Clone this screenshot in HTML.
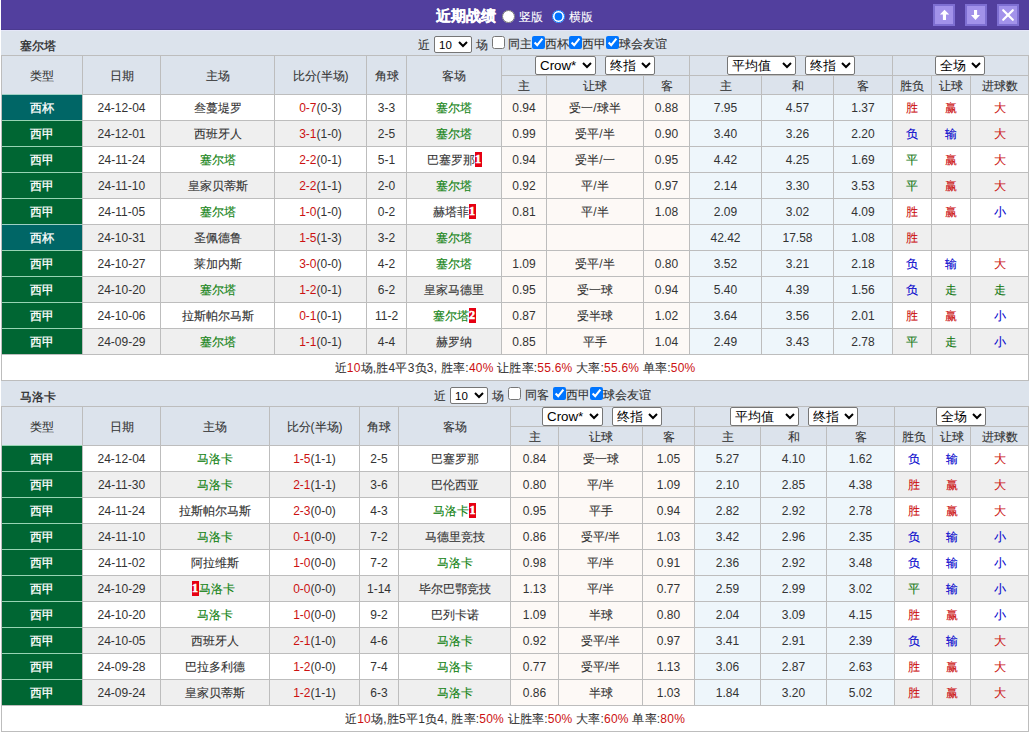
<!DOCTYPE html>
<html><head><meta charset="utf-8"><style>
html,body{margin:0;padding:0;background:#fff;width:1031px;height:734px;overflow:hidden;position:relative}
body{font-family:"Liberation Sans",sans-serif;font-size:12px;color:#333333}
.a{position:absolute}
.t{position:absolute;text-align:center;white-space:nowrap;overflow:visible}
.c{-webkit-text-stroke:var(--s,0.1px) currentColor}
.bd{background:#e60012;color:#fff;font-weight:bold;font-family:"Liberation Serif",serif;padding:0;width:7px;text-align:center;display:inline-block;line-height:15px;vertical-align:1px;-webkit-text-stroke:0.6px #fff}
.sl{position:absolute;margin:0;font-family:"Liberation Sans",sans-serif;font-size:13.33px;color:#000;background:#fff;border:1px solid #767676;border-radius:2px}
.cb{position:absolute;margin:0;width:13px;height:13px}
.rd{position:absolute;margin:0;width:13px;height:13px}
.btn{position:absolute;width:18px;height:18px;border:2px solid #7e6fd2;background:#a292ea}
</style></head><body>
<div class="a" style="left:1px;top:0px;width:1028px;height:30px;background:#523f9e;"></div><div class="t" style="left:436px;top:1px;height:30px;line-height:30px;color:#fff;font-weight:bold;font-size:15px;text-align:left;--s:0.3px"><span class="c">近期战绩</span></div><input type="radio" name="v" class="rd" style="left:502px;top:10px"><div class="t" style="left:519px;top:0px;height:30px;line-height:34px;color:#fff;text-align:left"><span class="c">竖版</span></div><input type="radio" name="v" class="rd" checked style="left:552px;top:10px"><div class="t" style="left:569px;top:0px;height:30px;line-height:34px;color:#fff;text-align:left"><span class="c">横版</span></div><div class="btn" style="left:933px;top:4px"></div><div class="btn" style="left:965px;top:4px"></div><div class="btn" style="left:997px;top:4px"></div><svg class="a" style="left:933px;top:4px" width="22" height="22" viewBox="0 0 22 22"><path d="M11.5 5.7 L16.2 10.6 H13 V15.9 H9.9 V10.6 H6.9 Z" fill="#fff"/></svg><svg class="a" style="left:965px;top:4px" width="22" height="22" viewBox="0 0 22 22"><path d="M9 6 H12.1 V11.1 H15 L10.5 15.9 L6 11.1 H9 Z" fill="#fff"/></svg><svg class="a" style="left:997px;top:4px" width="22" height="22" viewBox="0 0 22 22"><path d="M6.2 6.2 L15.8 15.8 M15.8 6.2 L6.2 15.8" stroke="#fff" stroke-width="2.2" stroke-linecap="round"/></svg><div class="a" style="left:1px;top:30px;width:1028px;height:25px;background:#dce3ec;"></div><div class="a" style="left:1px;top:29px;width:1028px;height:1px;background:#4b3a90;"></div><div class="a" style="left:1px;top:30px;width:1028px;height:1px;background:#e4e6f8;"></div><div class="t" style="left:20px;top:33px;height:25px;line-height:27px;text-align:left;color:#222;--s:0.25px"><span class="c">塞尔塔</span></div><div class="t" style="left:418px;top:32px;height:25px;line-height:27px;text-align:left"><span class="c">近</span></div><select class="sl" style="left:434px;top:36px;width:38px;height:17px;font-size:11.5px"><option>10</option></select><div class="t" style="left:476px;top:32px;height:25px;line-height:27px;text-align:left"><span class="c">场</span></div><input type="checkbox" class="cb" style="left:492px;top:36px"><div class="t" style="left:508px;top:31px;height:25px;line-height:27px;text-align:left"><span class="c">同主</span></div><input type="checkbox" class="cb" checked style="left:532px;top:36px"><div class="t" style="left:545px;top:31px;height:25px;line-height:27px;text-align:left"><span class="c">西杯</span></div><input type="checkbox" class="cb" checked style="left:569px;top:36px"><div class="t" style="left:582px;top:31px;height:25px;line-height:27px;text-align:left"><span class="c">西甲</span></div><input type="checkbox" class="cb" checked style="left:606px;top:36px"><div class="t" style="left:619px;top:31px;height:25px;line-height:27px;text-align:left"><span class="c">球会友谊</span></div><div class="a" style="left:1px;top:55px;width:1028px;height:326px;background:#bdbdbd;"></div><div class="a" style="left:2px;top:56px;width:80px;height:38px;background:#dce3ec;"></div><div class="t" style="left:2px;top:57px;width:80px;height:38px;line-height:38px;"><span class="c">类型</span></div><div class="a" style="left:83px;top:56px;width:77px;height:38px;background:#dce3ec;"></div><div class="t" style="left:83px;top:57px;width:77px;height:38px;line-height:38px;"><span class="c">日期</span></div><div class="a" style="left:161px;top:56px;width:113px;height:38px;background:#dce3ec;"></div><div class="t" style="left:161px;top:57px;width:113px;height:38px;line-height:38px;"><span class="c">主场</span></div><div class="a" style="left:275px;top:56px;width:91px;height:38px;background:#dce3ec;"></div><div class="t" style="left:275px;top:57px;width:91px;height:38px;line-height:38px;"><span class="c">比分</span>(<span class="c">半场</span>)</div><div class="a" style="left:367px;top:56px;width:39px;height:38px;background:#dce3ec;"></div><div class="t" style="left:367px;top:57px;width:39px;height:38px;line-height:38px;"><span class="c">角球</span></div><div class="a" style="left:407px;top:56px;width:94px;height:38px;background:#dce3ec;"></div><div class="t" style="left:407px;top:57px;width:94px;height:38px;line-height:38px;"><span class="c">客场</span></div><div class="a" style="left:502px;top:56px;width:187px;height:19px;background:#dce3ec;"></div><div class="a" style="left:690px;top:56px;width:202px;height:19px;background:#dce3ec;"></div><div class="a" style="left:893px;top:56px;width:135px;height:19px;background:#dce3ec;"></div><div class="a" style="left:502px;top:76px;width:44px;height:18px;background:#dce3ec;"></div><div class="t" style="left:502px;top:77px;width:44px;height:18px;line-height:18px;"><span class="c">主</span></div><div class="a" style="left:547px;top:76px;width:96px;height:18px;background:#dce3ec;"></div><div class="t" style="left:547px;top:77px;width:96px;height:18px;line-height:18px;"><span class="c">让球</span></div><div class="a" style="left:644px;top:76px;width:45px;height:18px;background:#dce3ec;"></div><div class="t" style="left:644px;top:77px;width:45px;height:18px;line-height:18px;"><span class="c">客</span></div><div class="a" style="left:690px;top:76px;width:71px;height:18px;background:#dce3ec;"></div><div class="t" style="left:690px;top:77px;width:71px;height:18px;line-height:18px;"><span class="c">主</span></div><div class="a" style="left:762px;top:76px;width:71px;height:18px;background:#dce3ec;"></div><div class="t" style="left:762px;top:77px;width:71px;height:18px;line-height:18px;"><span class="c">和</span></div><div class="a" style="left:834px;top:76px;width:58px;height:18px;background:#dce3ec;"></div><div class="t" style="left:834px;top:77px;width:58px;height:18px;line-height:18px;"><span class="c">客</span></div><div class="a" style="left:893px;top:76px;width:38px;height:18px;background:#dce3ec;"></div><div class="t" style="left:893px;top:77px;width:38px;height:18px;line-height:18px;"><span class="c">胜负</span></div><div class="a" style="left:932px;top:76px;width:38px;height:18px;background:#dce3ec;"></div><div class="t" style="left:932px;top:77px;width:38px;height:18px;line-height:18px;"><span class="c">让球</span></div><div class="a" style="left:971px;top:76px;width:57px;height:18px;background:#dce3ec;"></div><div class="t" style="left:971px;top:77px;width:57px;height:18px;line-height:18px;"><span class="c">进球数</span></div><div class="a" style="left:2px;top:94px;width:80px;height:1px;background:#9fd0c4;"></div><div class="a" style="left:2px;top:95px;width:80px;height:25px;background:#006666;"></div><div class="t" style="left:2px;top:96px;width:80px;height:25px;line-height:25px;color:#fff;--s:0.3px;"><span class="c">西杯</span></div><div class="a" style="left:83px;top:95px;width:77px;height:25px;background:#ffffff;"></div><div class="t" style="left:83px;top:96px;width:77px;height:25px;line-height:25px;">24-12-04</div><div class="a" style="left:161px;top:95px;width:113px;height:25px;background:#ffffff;"></div><div class="t" style="left:161px;top:96px;width:113px;height:25px;line-height:25px;"><span class="c">叁蔓堤罗</span></div><div class="a" style="left:275px;top:95px;width:91px;height:25px;background:#ffffff;"></div><div class="t" style="left:275px;top:96px;width:91px;height:25px;line-height:25px;"><span style="color:#cc1111">0-7</span>(0-3)</div><div class="a" style="left:367px;top:95px;width:39px;height:25px;background:#ffffff;"></div><div class="t" style="left:367px;top:96px;width:39px;height:25px;line-height:25px;">3-3</div><div class="a" style="left:407px;top:95px;width:94px;height:25px;background:#ffffff;"></div><div class="t" style="left:407px;top:96px;width:94px;height:25px;line-height:25px;"><span style="color:#0d800d"><span class="c">塞尔塔</span></span></div><div class="a" style="left:502px;top:95px;width:44px;height:25px;background:#fdf9f6;"></div><div class="t" style="left:502px;top:96px;width:44px;height:25px;line-height:25px;">0.94</div><div class="a" style="left:547px;top:95px;width:96px;height:25px;background:#fdf9f6;"></div><div class="t" style="left:547px;top:96px;width:96px;height:25px;line-height:25px;"><span class="c">受一</span>/<span class="c">球半</span></div><div class="a" style="left:644px;top:95px;width:45px;height:25px;background:#fdf9f6;"></div><div class="t" style="left:644px;top:96px;width:45px;height:25px;line-height:25px;">0.88</div><div class="a" style="left:690px;top:95px;width:71px;height:25px;background:#eef6fb;"></div><div class="t" style="left:690px;top:96px;width:71px;height:25px;line-height:25px;">7.95</div><div class="a" style="left:762px;top:95px;width:71px;height:25px;background:#eef6fb;"></div><div class="t" style="left:762px;top:96px;width:71px;height:25px;line-height:25px;">4.57</div><div class="a" style="left:834px;top:95px;width:58px;height:25px;background:#eef6fb;"></div><div class="t" style="left:834px;top:96px;width:58px;height:25px;line-height:25px;">1.37</div><div class="a" style="left:893px;top:95px;width:38px;height:25px;background:#ffffff;"></div><div class="t" style="left:893px;top:96px;width:38px;height:25px;line-height:25px;"><span style="color:#cc1111"><span class="c">胜</span></span></div><div class="a" style="left:932px;top:95px;width:38px;height:25px;background:#ffffff;"></div><div class="t" style="left:932px;top:96px;width:38px;height:25px;line-height:25px;"><span style="color:#cc1111"><span class="c">赢</span></span></div><div class="a" style="left:971px;top:95px;width:57px;height:25px;background:#ffffff;"></div><div class="t" style="left:971px;top:96px;width:57px;height:25px;line-height:25px;"><span style="color:#cc1111"><span class="c">大</span></span></div><div class="a" style="left:2px;top:120px;width:80px;height:1px;background:#98d4b4;"></div><div class="a" style="left:2px;top:121px;width:80px;height:25px;background:#006633;"></div><div class="t" style="left:2px;top:122px;width:80px;height:25px;line-height:25px;color:#fff;--s:0.3px;"><span class="c">西甲</span></div><div class="a" style="left:83px;top:121px;width:77px;height:25px;background:#efefef;"></div><div class="t" style="left:83px;top:122px;width:77px;height:25px;line-height:25px;">24-12-01</div><div class="a" style="left:161px;top:121px;width:113px;height:25px;background:#efefef;"></div><div class="t" style="left:161px;top:122px;width:113px;height:25px;line-height:25px;"><span class="c">西班牙人</span></div><div class="a" style="left:275px;top:121px;width:91px;height:25px;background:#efefef;"></div><div class="t" style="left:275px;top:122px;width:91px;height:25px;line-height:25px;"><span style="color:#cc1111">3-1</span>(1-0)</div><div class="a" style="left:367px;top:121px;width:39px;height:25px;background:#efefef;"></div><div class="t" style="left:367px;top:122px;width:39px;height:25px;line-height:25px;">2-5</div><div class="a" style="left:407px;top:121px;width:94px;height:25px;background:#efefef;"></div><div class="t" style="left:407px;top:122px;width:94px;height:25px;line-height:25px;"><span style="color:#0d800d"><span class="c">塞尔塔</span></span></div><div class="a" style="left:502px;top:121px;width:44px;height:25px;background:#fdf9f6;"></div><div class="t" style="left:502px;top:122px;width:44px;height:25px;line-height:25px;">0.99</div><div class="a" style="left:547px;top:121px;width:96px;height:25px;background:#fdf9f6;"></div><div class="t" style="left:547px;top:122px;width:96px;height:25px;line-height:25px;"><span class="c">受平</span>/<span class="c">半</span></div><div class="a" style="left:644px;top:121px;width:45px;height:25px;background:#fdf9f6;"></div><div class="t" style="left:644px;top:122px;width:45px;height:25px;line-height:25px;">0.90</div><div class="a" style="left:690px;top:121px;width:71px;height:25px;background:#eef6fb;"></div><div class="t" style="left:690px;top:122px;width:71px;height:25px;line-height:25px;">3.40</div><div class="a" style="left:762px;top:121px;width:71px;height:25px;background:#eef6fb;"></div><div class="t" style="left:762px;top:122px;width:71px;height:25px;line-height:25px;">3.26</div><div class="a" style="left:834px;top:121px;width:58px;height:25px;background:#eef6fb;"></div><div class="t" style="left:834px;top:122px;width:58px;height:25px;line-height:25px;">2.20</div><div class="a" style="left:893px;top:121px;width:38px;height:25px;background:#efefef;"></div><div class="t" style="left:893px;top:122px;width:38px;height:25px;line-height:25px;"><span style="color:#0000cc"><span class="c">负</span></span></div><div class="a" style="left:932px;top:121px;width:38px;height:25px;background:#efefef;"></div><div class="t" style="left:932px;top:122px;width:38px;height:25px;line-height:25px;"><span style="color:#0000cc"><span class="c">输</span></span></div><div class="a" style="left:971px;top:121px;width:57px;height:25px;background:#efefef;"></div><div class="t" style="left:971px;top:122px;width:57px;height:25px;line-height:25px;"><span style="color:#cc1111"><span class="c">大</span></span></div><div class="a" style="left:2px;top:146px;width:80px;height:1px;background:#98d4b4;"></div><div class="a" style="left:2px;top:147px;width:80px;height:25px;background:#006633;"></div><div class="t" style="left:2px;top:148px;width:80px;height:25px;line-height:25px;color:#fff;--s:0.3px;"><span class="c">西甲</span></div><div class="a" style="left:83px;top:147px;width:77px;height:25px;background:#ffffff;"></div><div class="t" style="left:83px;top:148px;width:77px;height:25px;line-height:25px;">24-11-24</div><div class="a" style="left:161px;top:147px;width:113px;height:25px;background:#ffffff;"></div><div class="t" style="left:161px;top:148px;width:113px;height:25px;line-height:25px;"><span style="color:#0d800d"><span class="c">塞尔塔</span></span></div><div class="a" style="left:275px;top:147px;width:91px;height:25px;background:#ffffff;"></div><div class="t" style="left:275px;top:148px;width:91px;height:25px;line-height:25px;"><span style="color:#cc1111">2-2</span>(0-1)</div><div class="a" style="left:367px;top:147px;width:39px;height:25px;background:#ffffff;"></div><div class="t" style="left:367px;top:148px;width:39px;height:25px;line-height:25px;">5-1</div><div class="a" style="left:407px;top:147px;width:94px;height:25px;background:#ffffff;"></div><div class="t" style="left:407px;top:148px;width:94px;height:25px;line-height:25px;"><span class="c">巴塞罗那</span><span class="bd">1</span></div><div class="a" style="left:502px;top:147px;width:44px;height:25px;background:#fdf9f6;"></div><div class="t" style="left:502px;top:148px;width:44px;height:25px;line-height:25px;">0.94</div><div class="a" style="left:547px;top:147px;width:96px;height:25px;background:#fdf9f6;"></div><div class="t" style="left:547px;top:148px;width:96px;height:25px;line-height:25px;"><span class="c">受半</span>/<span class="c">一</span></div><div class="a" style="left:644px;top:147px;width:45px;height:25px;background:#fdf9f6;"></div><div class="t" style="left:644px;top:148px;width:45px;height:25px;line-height:25px;">0.95</div><div class="a" style="left:690px;top:147px;width:71px;height:25px;background:#eef6fb;"></div><div class="t" style="left:690px;top:148px;width:71px;height:25px;line-height:25px;">4.42</div><div class="a" style="left:762px;top:147px;width:71px;height:25px;background:#eef6fb;"></div><div class="t" style="left:762px;top:148px;width:71px;height:25px;line-height:25px;">4.25</div><div class="a" style="left:834px;top:147px;width:58px;height:25px;background:#eef6fb;"></div><div class="t" style="left:834px;top:148px;width:58px;height:25px;line-height:25px;">1.69</div><div class="a" style="left:893px;top:147px;width:38px;height:25px;background:#ffffff;"></div><div class="t" style="left:893px;top:148px;width:38px;height:25px;line-height:25px;"><span style="color:#117711"><span class="c">平</span></span></div><div class="a" style="left:932px;top:147px;width:38px;height:25px;background:#ffffff;"></div><div class="t" style="left:932px;top:148px;width:38px;height:25px;line-height:25px;"><span style="color:#cc1111"><span class="c">赢</span></span></div><div class="a" style="left:971px;top:147px;width:57px;height:25px;background:#ffffff;"></div><div class="t" style="left:971px;top:148px;width:57px;height:25px;line-height:25px;"><span style="color:#cc1111"><span class="c">大</span></span></div><div class="a" style="left:2px;top:172px;width:80px;height:1px;background:#98d4b4;"></div><div class="a" style="left:2px;top:173px;width:80px;height:25px;background:#006633;"></div><div class="t" style="left:2px;top:174px;width:80px;height:25px;line-height:25px;color:#fff;--s:0.3px;"><span class="c">西甲</span></div><div class="a" style="left:83px;top:173px;width:77px;height:25px;background:#efefef;"></div><div class="t" style="left:83px;top:174px;width:77px;height:25px;line-height:25px;">24-11-10</div><div class="a" style="left:161px;top:173px;width:113px;height:25px;background:#efefef;"></div><div class="t" style="left:161px;top:174px;width:113px;height:25px;line-height:25px;"><span class="c">皇家贝蒂斯</span></div><div class="a" style="left:275px;top:173px;width:91px;height:25px;background:#efefef;"></div><div class="t" style="left:275px;top:174px;width:91px;height:25px;line-height:25px;"><span style="color:#cc1111">2-2</span>(1-1)</div><div class="a" style="left:367px;top:173px;width:39px;height:25px;background:#efefef;"></div><div class="t" style="left:367px;top:174px;width:39px;height:25px;line-height:25px;">2-0</div><div class="a" style="left:407px;top:173px;width:94px;height:25px;background:#efefef;"></div><div class="t" style="left:407px;top:174px;width:94px;height:25px;line-height:25px;"><span style="color:#0d800d"><span class="c">塞尔塔</span></span></div><div class="a" style="left:502px;top:173px;width:44px;height:25px;background:#fdf9f6;"></div><div class="t" style="left:502px;top:174px;width:44px;height:25px;line-height:25px;">0.92</div><div class="a" style="left:547px;top:173px;width:96px;height:25px;background:#fdf9f6;"></div><div class="t" style="left:547px;top:174px;width:96px;height:25px;line-height:25px;"><span class="c">平</span>/<span class="c">半</span></div><div class="a" style="left:644px;top:173px;width:45px;height:25px;background:#fdf9f6;"></div><div class="t" style="left:644px;top:174px;width:45px;height:25px;line-height:25px;">0.97</div><div class="a" style="left:690px;top:173px;width:71px;height:25px;background:#eef6fb;"></div><div class="t" style="left:690px;top:174px;width:71px;height:25px;line-height:25px;">2.14</div><div class="a" style="left:762px;top:173px;width:71px;height:25px;background:#eef6fb;"></div><div class="t" style="left:762px;top:174px;width:71px;height:25px;line-height:25px;">3.30</div><div class="a" style="left:834px;top:173px;width:58px;height:25px;background:#eef6fb;"></div><div class="t" style="left:834px;top:174px;width:58px;height:25px;line-height:25px;">3.53</div><div class="a" style="left:893px;top:173px;width:38px;height:25px;background:#efefef;"></div><div class="t" style="left:893px;top:174px;width:38px;height:25px;line-height:25px;"><span style="color:#117711"><span class="c">平</span></span></div><div class="a" style="left:932px;top:173px;width:38px;height:25px;background:#efefef;"></div><div class="t" style="left:932px;top:174px;width:38px;height:25px;line-height:25px;"><span style="color:#cc1111"><span class="c">赢</span></span></div><div class="a" style="left:971px;top:173px;width:57px;height:25px;background:#efefef;"></div><div class="t" style="left:971px;top:174px;width:57px;height:25px;line-height:25px;"><span style="color:#cc1111"><span class="c">大</span></span></div><div class="a" style="left:2px;top:198px;width:80px;height:1px;background:#98d4b4;"></div><div class="a" style="left:2px;top:199px;width:80px;height:25px;background:#006633;"></div><div class="t" style="left:2px;top:200px;width:80px;height:25px;line-height:25px;color:#fff;--s:0.3px;"><span class="c">西甲</span></div><div class="a" style="left:83px;top:199px;width:77px;height:25px;background:#ffffff;"></div><div class="t" style="left:83px;top:200px;width:77px;height:25px;line-height:25px;">24-11-05</div><div class="a" style="left:161px;top:199px;width:113px;height:25px;background:#ffffff;"></div><div class="t" style="left:161px;top:200px;width:113px;height:25px;line-height:25px;"><span style="color:#0d800d"><span class="c">塞尔塔</span></span></div><div class="a" style="left:275px;top:199px;width:91px;height:25px;background:#ffffff;"></div><div class="t" style="left:275px;top:200px;width:91px;height:25px;line-height:25px;"><span style="color:#cc1111">1-0</span>(1-0)</div><div class="a" style="left:367px;top:199px;width:39px;height:25px;background:#ffffff;"></div><div class="t" style="left:367px;top:200px;width:39px;height:25px;line-height:25px;">0-2</div><div class="a" style="left:407px;top:199px;width:94px;height:25px;background:#ffffff;"></div><div class="t" style="left:407px;top:200px;width:94px;height:25px;line-height:25px;"><span class="c">赫塔菲</span><span class="bd">1</span></div><div class="a" style="left:502px;top:199px;width:44px;height:25px;background:#fdf9f6;"></div><div class="t" style="left:502px;top:200px;width:44px;height:25px;line-height:25px;">0.81</div><div class="a" style="left:547px;top:199px;width:96px;height:25px;background:#fdf9f6;"></div><div class="t" style="left:547px;top:200px;width:96px;height:25px;line-height:25px;"><span class="c">平</span>/<span class="c">半</span></div><div class="a" style="left:644px;top:199px;width:45px;height:25px;background:#fdf9f6;"></div><div class="t" style="left:644px;top:200px;width:45px;height:25px;line-height:25px;">1.08</div><div class="a" style="left:690px;top:199px;width:71px;height:25px;background:#eef6fb;"></div><div class="t" style="left:690px;top:200px;width:71px;height:25px;line-height:25px;">2.09</div><div class="a" style="left:762px;top:199px;width:71px;height:25px;background:#eef6fb;"></div><div class="t" style="left:762px;top:200px;width:71px;height:25px;line-height:25px;">3.02</div><div class="a" style="left:834px;top:199px;width:58px;height:25px;background:#eef6fb;"></div><div class="t" style="left:834px;top:200px;width:58px;height:25px;line-height:25px;">4.09</div><div class="a" style="left:893px;top:199px;width:38px;height:25px;background:#ffffff;"></div><div class="t" style="left:893px;top:200px;width:38px;height:25px;line-height:25px;"><span style="color:#cc1111"><span class="c">胜</span></span></div><div class="a" style="left:932px;top:199px;width:38px;height:25px;background:#ffffff;"></div><div class="t" style="left:932px;top:200px;width:38px;height:25px;line-height:25px;"><span style="color:#cc1111"><span class="c">赢</span></span></div><div class="a" style="left:971px;top:199px;width:57px;height:25px;background:#ffffff;"></div><div class="t" style="left:971px;top:200px;width:57px;height:25px;line-height:25px;"><span style="color:#0000cc"><span class="c">小</span></span></div><div class="a" style="left:2px;top:224px;width:80px;height:1px;background:#9fd0c4;"></div><div class="a" style="left:2px;top:225px;width:80px;height:25px;background:#006666;"></div><div class="t" style="left:2px;top:226px;width:80px;height:25px;line-height:25px;color:#fff;--s:0.3px;"><span class="c">西杯</span></div><div class="a" style="left:83px;top:225px;width:77px;height:25px;background:#efefef;"></div><div class="t" style="left:83px;top:226px;width:77px;height:25px;line-height:25px;">24-10-31</div><div class="a" style="left:161px;top:225px;width:113px;height:25px;background:#efefef;"></div><div class="t" style="left:161px;top:226px;width:113px;height:25px;line-height:25px;"><span class="c">圣佩德鲁</span></div><div class="a" style="left:275px;top:225px;width:91px;height:25px;background:#efefef;"></div><div class="t" style="left:275px;top:226px;width:91px;height:25px;line-height:25px;"><span style="color:#cc1111">1-5</span>(1-3)</div><div class="a" style="left:367px;top:225px;width:39px;height:25px;background:#efefef;"></div><div class="t" style="left:367px;top:226px;width:39px;height:25px;line-height:25px;">3-2</div><div class="a" style="left:407px;top:225px;width:94px;height:25px;background:#efefef;"></div><div class="t" style="left:407px;top:226px;width:94px;height:25px;line-height:25px;"><span style="color:#0d800d"><span class="c">塞尔塔</span></span></div><div class="a" style="left:502px;top:225px;width:44px;height:25px;background:#fdf9f6;"></div><div class="a" style="left:547px;top:225px;width:96px;height:25px;background:#fdf9f6;"></div><div class="a" style="left:644px;top:225px;width:45px;height:25px;background:#fdf9f6;"></div><div class="a" style="left:690px;top:225px;width:71px;height:25px;background:#eef6fb;"></div><div class="t" style="left:690px;top:226px;width:71px;height:25px;line-height:25px;">42.42</div><div class="a" style="left:762px;top:225px;width:71px;height:25px;background:#eef6fb;"></div><div class="t" style="left:762px;top:226px;width:71px;height:25px;line-height:25px;">17.58</div><div class="a" style="left:834px;top:225px;width:58px;height:25px;background:#eef6fb;"></div><div class="t" style="left:834px;top:226px;width:58px;height:25px;line-height:25px;">1.08</div><div class="a" style="left:893px;top:225px;width:38px;height:25px;background:#efefef;"></div><div class="t" style="left:893px;top:226px;width:38px;height:25px;line-height:25px;"><span style="color:#cc1111"><span class="c">胜</span></span></div><div class="a" style="left:932px;top:225px;width:38px;height:25px;background:#efefef;"></div><div class="a" style="left:971px;top:225px;width:57px;height:25px;background:#efefef;"></div><div class="a" style="left:2px;top:250px;width:80px;height:1px;background:#98d4b4;"></div><div class="a" style="left:2px;top:251px;width:80px;height:25px;background:#006633;"></div><div class="t" style="left:2px;top:252px;width:80px;height:25px;line-height:25px;color:#fff;--s:0.3px;"><span class="c">西甲</span></div><div class="a" style="left:83px;top:251px;width:77px;height:25px;background:#ffffff;"></div><div class="t" style="left:83px;top:252px;width:77px;height:25px;line-height:25px;">24-10-27</div><div class="a" style="left:161px;top:251px;width:113px;height:25px;background:#ffffff;"></div><div class="t" style="left:161px;top:252px;width:113px;height:25px;line-height:25px;"><span class="c">莱加内斯</span></div><div class="a" style="left:275px;top:251px;width:91px;height:25px;background:#ffffff;"></div><div class="t" style="left:275px;top:252px;width:91px;height:25px;line-height:25px;"><span style="color:#cc1111">3-0</span>(0-0)</div><div class="a" style="left:367px;top:251px;width:39px;height:25px;background:#ffffff;"></div><div class="t" style="left:367px;top:252px;width:39px;height:25px;line-height:25px;">4-2</div><div class="a" style="left:407px;top:251px;width:94px;height:25px;background:#ffffff;"></div><div class="t" style="left:407px;top:252px;width:94px;height:25px;line-height:25px;"><span style="color:#0d800d"><span class="c">塞尔塔</span></span></div><div class="a" style="left:502px;top:251px;width:44px;height:25px;background:#fdf9f6;"></div><div class="t" style="left:502px;top:252px;width:44px;height:25px;line-height:25px;">1.09</div><div class="a" style="left:547px;top:251px;width:96px;height:25px;background:#fdf9f6;"></div><div class="t" style="left:547px;top:252px;width:96px;height:25px;line-height:25px;"><span class="c">受平</span>/<span class="c">半</span></div><div class="a" style="left:644px;top:251px;width:45px;height:25px;background:#fdf9f6;"></div><div class="t" style="left:644px;top:252px;width:45px;height:25px;line-height:25px;">0.80</div><div class="a" style="left:690px;top:251px;width:71px;height:25px;background:#eef6fb;"></div><div class="t" style="left:690px;top:252px;width:71px;height:25px;line-height:25px;">3.52</div><div class="a" style="left:762px;top:251px;width:71px;height:25px;background:#eef6fb;"></div><div class="t" style="left:762px;top:252px;width:71px;height:25px;line-height:25px;">3.21</div><div class="a" style="left:834px;top:251px;width:58px;height:25px;background:#eef6fb;"></div><div class="t" style="left:834px;top:252px;width:58px;height:25px;line-height:25px;">2.18</div><div class="a" style="left:893px;top:251px;width:38px;height:25px;background:#ffffff;"></div><div class="t" style="left:893px;top:252px;width:38px;height:25px;line-height:25px;"><span style="color:#0000cc"><span class="c">负</span></span></div><div class="a" style="left:932px;top:251px;width:38px;height:25px;background:#ffffff;"></div><div class="t" style="left:932px;top:252px;width:38px;height:25px;line-height:25px;"><span style="color:#0000cc"><span class="c">输</span></span></div><div class="a" style="left:971px;top:251px;width:57px;height:25px;background:#ffffff;"></div><div class="t" style="left:971px;top:252px;width:57px;height:25px;line-height:25px;"><span style="color:#cc1111"><span class="c">大</span></span></div><div class="a" style="left:2px;top:276px;width:80px;height:1px;background:#98d4b4;"></div><div class="a" style="left:2px;top:277px;width:80px;height:25px;background:#006633;"></div><div class="t" style="left:2px;top:278px;width:80px;height:25px;line-height:25px;color:#fff;--s:0.3px;"><span class="c">西甲</span></div><div class="a" style="left:83px;top:277px;width:77px;height:25px;background:#efefef;"></div><div class="t" style="left:83px;top:278px;width:77px;height:25px;line-height:25px;">24-10-20</div><div class="a" style="left:161px;top:277px;width:113px;height:25px;background:#efefef;"></div><div class="t" style="left:161px;top:278px;width:113px;height:25px;line-height:25px;"><span style="color:#0d800d"><span class="c">塞尔塔</span></span></div><div class="a" style="left:275px;top:277px;width:91px;height:25px;background:#efefef;"></div><div class="t" style="left:275px;top:278px;width:91px;height:25px;line-height:25px;"><span style="color:#cc1111">1-2</span>(0-1)</div><div class="a" style="left:367px;top:277px;width:39px;height:25px;background:#efefef;"></div><div class="t" style="left:367px;top:278px;width:39px;height:25px;line-height:25px;">6-2</div><div class="a" style="left:407px;top:277px;width:94px;height:25px;background:#efefef;"></div><div class="t" style="left:407px;top:278px;width:94px;height:25px;line-height:25px;"><span class="c">皇家马德里</span></div><div class="a" style="left:502px;top:277px;width:44px;height:25px;background:#fdf9f6;"></div><div class="t" style="left:502px;top:278px;width:44px;height:25px;line-height:25px;">0.95</div><div class="a" style="left:547px;top:277px;width:96px;height:25px;background:#fdf9f6;"></div><div class="t" style="left:547px;top:278px;width:96px;height:25px;line-height:25px;"><span class="c">受一球</span></div><div class="a" style="left:644px;top:277px;width:45px;height:25px;background:#fdf9f6;"></div><div class="t" style="left:644px;top:278px;width:45px;height:25px;line-height:25px;">0.94</div><div class="a" style="left:690px;top:277px;width:71px;height:25px;background:#eef6fb;"></div><div class="t" style="left:690px;top:278px;width:71px;height:25px;line-height:25px;">5.40</div><div class="a" style="left:762px;top:277px;width:71px;height:25px;background:#eef6fb;"></div><div class="t" style="left:762px;top:278px;width:71px;height:25px;line-height:25px;">4.39</div><div class="a" style="left:834px;top:277px;width:58px;height:25px;background:#eef6fb;"></div><div class="t" style="left:834px;top:278px;width:58px;height:25px;line-height:25px;">1.56</div><div class="a" style="left:893px;top:277px;width:38px;height:25px;background:#efefef;"></div><div class="t" style="left:893px;top:278px;width:38px;height:25px;line-height:25px;"><span style="color:#0000cc"><span class="c">负</span></span></div><div class="a" style="left:932px;top:277px;width:38px;height:25px;background:#efefef;"></div><div class="t" style="left:932px;top:278px;width:38px;height:25px;line-height:25px;"><span style="color:#117711"><span class="c">走</span></span></div><div class="a" style="left:971px;top:277px;width:57px;height:25px;background:#efefef;"></div><div class="t" style="left:971px;top:278px;width:57px;height:25px;line-height:25px;"><span style="color:#117711"><span class="c">走</span></span></div><div class="a" style="left:2px;top:302px;width:80px;height:1px;background:#98d4b4;"></div><div class="a" style="left:2px;top:303px;width:80px;height:25px;background:#006633;"></div><div class="t" style="left:2px;top:304px;width:80px;height:25px;line-height:25px;color:#fff;--s:0.3px;"><span class="c">西甲</span></div><div class="a" style="left:83px;top:303px;width:77px;height:25px;background:#ffffff;"></div><div class="t" style="left:83px;top:304px;width:77px;height:25px;line-height:25px;">24-10-06</div><div class="a" style="left:161px;top:303px;width:113px;height:25px;background:#ffffff;"></div><div class="t" style="left:161px;top:304px;width:113px;height:25px;line-height:25px;"><span class="c">拉斯帕尔马斯</span></div><div class="a" style="left:275px;top:303px;width:91px;height:25px;background:#ffffff;"></div><div class="t" style="left:275px;top:304px;width:91px;height:25px;line-height:25px;"><span style="color:#cc1111">0-1</span>(0-1)</div><div class="a" style="left:367px;top:303px;width:39px;height:25px;background:#ffffff;"></div><div class="t" style="left:367px;top:304px;width:39px;height:25px;line-height:25px;">11-2</div><div class="a" style="left:407px;top:303px;width:94px;height:25px;background:#ffffff;"></div><div class="t" style="left:407px;top:304px;width:94px;height:25px;line-height:25px;"><span style="color:#0d800d"><span class="c">塞尔塔</span></span><span class="bd">2</span></div><div class="a" style="left:502px;top:303px;width:44px;height:25px;background:#fdf9f6;"></div><div class="t" style="left:502px;top:304px;width:44px;height:25px;line-height:25px;">0.87</div><div class="a" style="left:547px;top:303px;width:96px;height:25px;background:#fdf9f6;"></div><div class="t" style="left:547px;top:304px;width:96px;height:25px;line-height:25px;"><span class="c">受半球</span></div><div class="a" style="left:644px;top:303px;width:45px;height:25px;background:#fdf9f6;"></div><div class="t" style="left:644px;top:304px;width:45px;height:25px;line-height:25px;">1.02</div><div class="a" style="left:690px;top:303px;width:71px;height:25px;background:#eef6fb;"></div><div class="t" style="left:690px;top:304px;width:71px;height:25px;line-height:25px;">3.64</div><div class="a" style="left:762px;top:303px;width:71px;height:25px;background:#eef6fb;"></div><div class="t" style="left:762px;top:304px;width:71px;height:25px;line-height:25px;">3.56</div><div class="a" style="left:834px;top:303px;width:58px;height:25px;background:#eef6fb;"></div><div class="t" style="left:834px;top:304px;width:58px;height:25px;line-height:25px;">2.01</div><div class="a" style="left:893px;top:303px;width:38px;height:25px;background:#ffffff;"></div><div class="t" style="left:893px;top:304px;width:38px;height:25px;line-height:25px;"><span style="color:#cc1111"><span class="c">胜</span></span></div><div class="a" style="left:932px;top:303px;width:38px;height:25px;background:#ffffff;"></div><div class="t" style="left:932px;top:304px;width:38px;height:25px;line-height:25px;"><span style="color:#cc1111"><span class="c">赢</span></span></div><div class="a" style="left:971px;top:303px;width:57px;height:25px;background:#ffffff;"></div><div class="t" style="left:971px;top:304px;width:57px;height:25px;line-height:25px;"><span style="color:#0000cc"><span class="c">小</span></span></div><div class="a" style="left:2px;top:328px;width:80px;height:1px;background:#98d4b4;"></div><div class="a" style="left:2px;top:329px;width:80px;height:25px;background:#006633;"></div><div class="t" style="left:2px;top:330px;width:80px;height:25px;line-height:25px;color:#fff;--s:0.3px;"><span class="c">西甲</span></div><div class="a" style="left:83px;top:329px;width:77px;height:25px;background:#efefef;"></div><div class="t" style="left:83px;top:330px;width:77px;height:25px;line-height:25px;">24-09-29</div><div class="a" style="left:161px;top:329px;width:113px;height:25px;background:#efefef;"></div><div class="t" style="left:161px;top:330px;width:113px;height:25px;line-height:25px;"><span style="color:#0d800d"><span class="c">塞尔塔</span></span></div><div class="a" style="left:275px;top:329px;width:91px;height:25px;background:#efefef;"></div><div class="t" style="left:275px;top:330px;width:91px;height:25px;line-height:25px;"><span style="color:#cc1111">1-1</span>(0-1)</div><div class="a" style="left:367px;top:329px;width:39px;height:25px;background:#efefef;"></div><div class="t" style="left:367px;top:330px;width:39px;height:25px;line-height:25px;">4-4</div><div class="a" style="left:407px;top:329px;width:94px;height:25px;background:#efefef;"></div><div class="t" style="left:407px;top:330px;width:94px;height:25px;line-height:25px;"><span class="c">赫罗纳</span></div><div class="a" style="left:502px;top:329px;width:44px;height:25px;background:#fdf9f6;"></div><div class="t" style="left:502px;top:330px;width:44px;height:25px;line-height:25px;">0.85</div><div class="a" style="left:547px;top:329px;width:96px;height:25px;background:#fdf9f6;"></div><div class="t" style="left:547px;top:330px;width:96px;height:25px;line-height:25px;"><span class="c">平手</span></div><div class="a" style="left:644px;top:329px;width:45px;height:25px;background:#fdf9f6;"></div><div class="t" style="left:644px;top:330px;width:45px;height:25px;line-height:25px;">1.04</div><div class="a" style="left:690px;top:329px;width:71px;height:25px;background:#eef6fb;"></div><div class="t" style="left:690px;top:330px;width:71px;height:25px;line-height:25px;">2.49</div><div class="a" style="left:762px;top:329px;width:71px;height:25px;background:#eef6fb;"></div><div class="t" style="left:762px;top:330px;width:71px;height:25px;line-height:25px;">3.43</div><div class="a" style="left:834px;top:329px;width:58px;height:25px;background:#eef6fb;"></div><div class="t" style="left:834px;top:330px;width:58px;height:25px;line-height:25px;">2.78</div><div class="a" style="left:893px;top:329px;width:38px;height:25px;background:#efefef;"></div><div class="t" style="left:893px;top:330px;width:38px;height:25px;line-height:25px;"><span style="color:#117711"><span class="c">平</span></span></div><div class="a" style="left:932px;top:329px;width:38px;height:25px;background:#efefef;"></div><div class="t" style="left:932px;top:330px;width:38px;height:25px;line-height:25px;"><span style="color:#117711"><span class="c">走</span></span></div><div class="a" style="left:971px;top:329px;width:57px;height:25px;background:#efefef;"></div><div class="t" style="left:971px;top:330px;width:57px;height:25px;line-height:25px;"><span style="color:#0000cc"><span class="c">小</span></span></div><div class="a" style="left:2px;top:355px;width:1026px;height:25px;background:#ffffff;"></div><div class="t" style="left:2px;top:356px;width:1026px;height:25px;line-height:25px;letter-spacing:0.22px;"><span class="c">近</span><span style="color:#cc1111">10</span><span class="c">场</span>,<span class="c">胜</span>4<span class="c">平</span>3<span class="c">负</span>3, <span class="c">胜率</span>:<span style="color:#cc1111">40%</span> <span class="c">让胜率</span>:<span style="color:#cc1111">55.6%</span> <span class="c">大率</span>:<span style="color:#cc1111">55.6%</span> <span class="c">单率</span>:<span style="color:#cc1111">50%</span></div><select class="sl" style="left:535px;top:56px;width:61px;height:19px"><option>Crow*</option></select><select class="sl" style="left:605px;top:56px;width:50px;height:19px"><option><span class="c">终指</span></option></select><select class="sl" style="left:727px;top:56px;width:69px;height:19px"><option><span class="c">平均值</span></option></select><select class="sl" style="left:805px;top:56px;width:50px;height:19px"><option><span class="c">终指</span></option></select><select class="sl" style="left:935px;top:56px;width:50px;height:19px"><option><span class="c">全场</span></option></select><div class="a" style="left:1px;top:381px;width:1028px;height:25px;background:#dce3ec;"></div><div class="t" style="left:20px;top:384px;height:25px;line-height:27px;text-align:left;color:#222;--s:0.25px"><span class="c">马洛卡</span></div><div class="t" style="left:434px;top:383px;height:25px;line-height:27px;text-align:left"><span class="c">近</span></div><select class="sl" style="left:450px;top:387px;width:38px;height:17px;font-size:11.5px"><option>10</option></select><div class="t" style="left:492px;top:383px;height:25px;line-height:27px;text-align:left"><span class="c">场</span></div><input type="checkbox" class="cb" style="left:508px;top:387px"><div class="t" style="left:525px;top:382px;height:25px;line-height:27px;text-align:left"><span class="c">同客</span></div><input type="checkbox" class="cb" checked style="left:553px;top:387px"><div class="t" style="left:566px;top:382px;height:25px;line-height:27px;text-align:left"><span class="c">西甲</span></div><input type="checkbox" class="cb" checked style="left:590px;top:387px"><div class="t" style="left:603px;top:382px;height:25px;line-height:27px;text-align:left"><span class="c">球会友谊</span></div><div class="a" style="left:1px;top:406px;width:1028px;height:326px;background:#bdbdbd;"></div><div class="a" style="left:2px;top:407px;width:80px;height:38px;background:#dce3ec;"></div><div class="t" style="left:2px;top:408px;width:80px;height:38px;line-height:38px;"><span class="c">类型</span></div><div class="a" style="left:83px;top:407px;width:77px;height:38px;background:#dce3ec;"></div><div class="t" style="left:83px;top:408px;width:77px;height:38px;line-height:38px;"><span class="c">日期</span></div><div class="a" style="left:161px;top:407px;width:108px;height:38px;background:#dce3ec;"></div><div class="t" style="left:161px;top:408px;width:108px;height:38px;line-height:38px;"><span class="c">主场</span></div><div class="a" style="left:270px;top:407px;width:89px;height:38px;background:#dce3ec;"></div><div class="t" style="left:270px;top:408px;width:89px;height:38px;line-height:38px;"><span class="c">比分</span>(<span class="c">半场</span>)</div><div class="a" style="left:360px;top:407px;width:38px;height:38px;background:#dce3ec;"></div><div class="t" style="left:360px;top:408px;width:38px;height:38px;line-height:38px;"><span class="c">角球</span></div><div class="a" style="left:399px;top:407px;width:111px;height:38px;background:#dce3ec;"></div><div class="t" style="left:399px;top:408px;width:111px;height:38px;line-height:38px;"><span class="c">客场</span></div><div class="a" style="left:511px;top:407px;width:183px;height:19px;background:#dce3ec;"></div><div class="a" style="left:695px;top:407px;width:199px;height:19px;background:#dce3ec;"></div><div class="a" style="left:895px;top:407px;width:133px;height:19px;background:#dce3ec;"></div><div class="a" style="left:511px;top:427px;width:47px;height:18px;background:#dce3ec;"></div><div class="t" style="left:511px;top:428px;width:47px;height:18px;line-height:18px;"><span class="c">主</span></div><div class="a" style="left:559px;top:427px;width:83px;height:18px;background:#dce3ec;"></div><div class="t" style="left:559px;top:428px;width:83px;height:18px;line-height:18px;"><span class="c">让球</span></div><div class="a" style="left:643px;top:427px;width:51px;height:18px;background:#dce3ec;"></div><div class="t" style="left:643px;top:428px;width:51px;height:18px;line-height:18px;"><span class="c">客</span></div><div class="a" style="left:695px;top:427px;width:65px;height:18px;background:#dce3ec;"></div><div class="t" style="left:695px;top:428px;width:65px;height:18px;line-height:18px;"><span class="c">主</span></div><div class="a" style="left:761px;top:427px;width:65px;height:18px;background:#dce3ec;"></div><div class="t" style="left:761px;top:428px;width:65px;height:18px;line-height:18px;"><span class="c">和</span></div><div class="a" style="left:827px;top:427px;width:67px;height:18px;background:#dce3ec;"></div><div class="t" style="left:827px;top:428px;width:67px;height:18px;line-height:18px;"><span class="c">客</span></div><div class="a" style="left:895px;top:427px;width:37px;height:18px;background:#dce3ec;"></div><div class="t" style="left:895px;top:428px;width:37px;height:18px;line-height:18px;"><span class="c">胜负</span></div><div class="a" style="left:933px;top:427px;width:37px;height:18px;background:#dce3ec;"></div><div class="t" style="left:933px;top:428px;width:37px;height:18px;line-height:18px;"><span class="c">让球</span></div><div class="a" style="left:971px;top:427px;width:57px;height:18px;background:#dce3ec;"></div><div class="t" style="left:971px;top:428px;width:57px;height:18px;line-height:18px;"><span class="c">进球数</span></div><div class="a" style="left:2px;top:445px;width:80px;height:1px;background:#98d4b4;"></div><div class="a" style="left:2px;top:446px;width:80px;height:25px;background:#006633;"></div><div class="t" style="left:2px;top:447px;width:80px;height:25px;line-height:25px;color:#fff;--s:0.3px;"><span class="c">西甲</span></div><div class="a" style="left:83px;top:446px;width:77px;height:25px;background:#ffffff;"></div><div class="t" style="left:83px;top:447px;width:77px;height:25px;line-height:25px;">24-12-04</div><div class="a" style="left:161px;top:446px;width:108px;height:25px;background:#ffffff;"></div><div class="t" style="left:161px;top:447px;width:108px;height:25px;line-height:25px;"><span style="color:#0d800d"><span class="c">马洛卡</span></span></div><div class="a" style="left:270px;top:446px;width:89px;height:25px;background:#ffffff;"></div><div class="t" style="left:270px;top:447px;width:89px;height:25px;line-height:25px;"><span style="color:#cc1111">1-5</span>(1-1)</div><div class="a" style="left:360px;top:446px;width:38px;height:25px;background:#ffffff;"></div><div class="t" style="left:360px;top:447px;width:38px;height:25px;line-height:25px;">2-5</div><div class="a" style="left:399px;top:446px;width:111px;height:25px;background:#ffffff;"></div><div class="t" style="left:399px;top:447px;width:111px;height:25px;line-height:25px;"><span class="c">巴塞罗那</span></div><div class="a" style="left:511px;top:446px;width:47px;height:25px;background:#fdf9f6;"></div><div class="t" style="left:511px;top:447px;width:47px;height:25px;line-height:25px;">0.84</div><div class="a" style="left:559px;top:446px;width:83px;height:25px;background:#fdf9f6;"></div><div class="t" style="left:559px;top:447px;width:83px;height:25px;line-height:25px;"><span class="c">受一球</span></div><div class="a" style="left:643px;top:446px;width:51px;height:25px;background:#fdf9f6;"></div><div class="t" style="left:643px;top:447px;width:51px;height:25px;line-height:25px;">1.05</div><div class="a" style="left:695px;top:446px;width:65px;height:25px;background:#eef6fb;"></div><div class="t" style="left:695px;top:447px;width:65px;height:25px;line-height:25px;">5.27</div><div class="a" style="left:761px;top:446px;width:65px;height:25px;background:#eef6fb;"></div><div class="t" style="left:761px;top:447px;width:65px;height:25px;line-height:25px;">4.10</div><div class="a" style="left:827px;top:446px;width:67px;height:25px;background:#eef6fb;"></div><div class="t" style="left:827px;top:447px;width:67px;height:25px;line-height:25px;">1.62</div><div class="a" style="left:895px;top:446px;width:37px;height:25px;background:#ffffff;"></div><div class="t" style="left:895px;top:447px;width:37px;height:25px;line-height:25px;"><span style="color:#0000cc"><span class="c">负</span></span></div><div class="a" style="left:933px;top:446px;width:37px;height:25px;background:#ffffff;"></div><div class="t" style="left:933px;top:447px;width:37px;height:25px;line-height:25px;"><span style="color:#0000cc"><span class="c">输</span></span></div><div class="a" style="left:971px;top:446px;width:57px;height:25px;background:#ffffff;"></div><div class="t" style="left:971px;top:447px;width:57px;height:25px;line-height:25px;"><span style="color:#cc1111"><span class="c">大</span></span></div><div class="a" style="left:2px;top:471px;width:80px;height:1px;background:#98d4b4;"></div><div class="a" style="left:2px;top:472px;width:80px;height:25px;background:#006633;"></div><div class="t" style="left:2px;top:473px;width:80px;height:25px;line-height:25px;color:#fff;--s:0.3px;"><span class="c">西甲</span></div><div class="a" style="left:83px;top:472px;width:77px;height:25px;background:#efefef;"></div><div class="t" style="left:83px;top:473px;width:77px;height:25px;line-height:25px;">24-11-30</div><div class="a" style="left:161px;top:472px;width:108px;height:25px;background:#efefef;"></div><div class="t" style="left:161px;top:473px;width:108px;height:25px;line-height:25px;"><span style="color:#0d800d"><span class="c">马洛卡</span></span></div><div class="a" style="left:270px;top:472px;width:89px;height:25px;background:#efefef;"></div><div class="t" style="left:270px;top:473px;width:89px;height:25px;line-height:25px;"><span style="color:#cc1111">2-1</span>(1-1)</div><div class="a" style="left:360px;top:472px;width:38px;height:25px;background:#efefef;"></div><div class="t" style="left:360px;top:473px;width:38px;height:25px;line-height:25px;">3-6</div><div class="a" style="left:399px;top:472px;width:111px;height:25px;background:#efefef;"></div><div class="t" style="left:399px;top:473px;width:111px;height:25px;line-height:25px;"><span class="c">巴伦西亚</span></div><div class="a" style="left:511px;top:472px;width:47px;height:25px;background:#fdf9f6;"></div><div class="t" style="left:511px;top:473px;width:47px;height:25px;line-height:25px;">0.80</div><div class="a" style="left:559px;top:472px;width:83px;height:25px;background:#fdf9f6;"></div><div class="t" style="left:559px;top:473px;width:83px;height:25px;line-height:25px;"><span class="c">平</span>/<span class="c">半</span></div><div class="a" style="left:643px;top:472px;width:51px;height:25px;background:#fdf9f6;"></div><div class="t" style="left:643px;top:473px;width:51px;height:25px;line-height:25px;">1.09</div><div class="a" style="left:695px;top:472px;width:65px;height:25px;background:#eef6fb;"></div><div class="t" style="left:695px;top:473px;width:65px;height:25px;line-height:25px;">2.10</div><div class="a" style="left:761px;top:472px;width:65px;height:25px;background:#eef6fb;"></div><div class="t" style="left:761px;top:473px;width:65px;height:25px;line-height:25px;">2.85</div><div class="a" style="left:827px;top:472px;width:67px;height:25px;background:#eef6fb;"></div><div class="t" style="left:827px;top:473px;width:67px;height:25px;line-height:25px;">4.38</div><div class="a" style="left:895px;top:472px;width:37px;height:25px;background:#efefef;"></div><div class="t" style="left:895px;top:473px;width:37px;height:25px;line-height:25px;"><span style="color:#cc1111"><span class="c">胜</span></span></div><div class="a" style="left:933px;top:472px;width:37px;height:25px;background:#efefef;"></div><div class="t" style="left:933px;top:473px;width:37px;height:25px;line-height:25px;"><span style="color:#cc1111"><span class="c">赢</span></span></div><div class="a" style="left:971px;top:472px;width:57px;height:25px;background:#efefef;"></div><div class="t" style="left:971px;top:473px;width:57px;height:25px;line-height:25px;"><span style="color:#cc1111"><span class="c">大</span></span></div><div class="a" style="left:2px;top:497px;width:80px;height:1px;background:#98d4b4;"></div><div class="a" style="left:2px;top:498px;width:80px;height:25px;background:#006633;"></div><div class="t" style="left:2px;top:499px;width:80px;height:25px;line-height:25px;color:#fff;--s:0.3px;"><span class="c">西甲</span></div><div class="a" style="left:83px;top:498px;width:77px;height:25px;background:#ffffff;"></div><div class="t" style="left:83px;top:499px;width:77px;height:25px;line-height:25px;">24-11-24</div><div class="a" style="left:161px;top:498px;width:108px;height:25px;background:#ffffff;"></div><div class="t" style="left:161px;top:499px;width:108px;height:25px;line-height:25px;"><span class="c">拉斯帕尔马斯</span></div><div class="a" style="left:270px;top:498px;width:89px;height:25px;background:#ffffff;"></div><div class="t" style="left:270px;top:499px;width:89px;height:25px;line-height:25px;"><span style="color:#cc1111">2-3</span>(0-0)</div><div class="a" style="left:360px;top:498px;width:38px;height:25px;background:#ffffff;"></div><div class="t" style="left:360px;top:499px;width:38px;height:25px;line-height:25px;">4-3</div><div class="a" style="left:399px;top:498px;width:111px;height:25px;background:#ffffff;"></div><div class="t" style="left:399px;top:499px;width:111px;height:25px;line-height:25px;"><span style="color:#0d800d"><span class="c">马洛卡</span></span><span class="bd">1</span></div><div class="a" style="left:511px;top:498px;width:47px;height:25px;background:#fdf9f6;"></div><div class="t" style="left:511px;top:499px;width:47px;height:25px;line-height:25px;">0.95</div><div class="a" style="left:559px;top:498px;width:83px;height:25px;background:#fdf9f6;"></div><div class="t" style="left:559px;top:499px;width:83px;height:25px;line-height:25px;"><span class="c">平手</span></div><div class="a" style="left:643px;top:498px;width:51px;height:25px;background:#fdf9f6;"></div><div class="t" style="left:643px;top:499px;width:51px;height:25px;line-height:25px;">0.94</div><div class="a" style="left:695px;top:498px;width:65px;height:25px;background:#eef6fb;"></div><div class="t" style="left:695px;top:499px;width:65px;height:25px;line-height:25px;">2.82</div><div class="a" style="left:761px;top:498px;width:65px;height:25px;background:#eef6fb;"></div><div class="t" style="left:761px;top:499px;width:65px;height:25px;line-height:25px;">2.92</div><div class="a" style="left:827px;top:498px;width:67px;height:25px;background:#eef6fb;"></div><div class="t" style="left:827px;top:499px;width:67px;height:25px;line-height:25px;">2.78</div><div class="a" style="left:895px;top:498px;width:37px;height:25px;background:#ffffff;"></div><div class="t" style="left:895px;top:499px;width:37px;height:25px;line-height:25px;"><span style="color:#cc1111"><span class="c">胜</span></span></div><div class="a" style="left:933px;top:498px;width:37px;height:25px;background:#ffffff;"></div><div class="t" style="left:933px;top:499px;width:37px;height:25px;line-height:25px;"><span style="color:#cc1111"><span class="c">赢</span></span></div><div class="a" style="left:971px;top:498px;width:57px;height:25px;background:#ffffff;"></div><div class="t" style="left:971px;top:499px;width:57px;height:25px;line-height:25px;"><span style="color:#cc1111"><span class="c">大</span></span></div><div class="a" style="left:2px;top:523px;width:80px;height:1px;background:#98d4b4;"></div><div class="a" style="left:2px;top:524px;width:80px;height:25px;background:#006633;"></div><div class="t" style="left:2px;top:525px;width:80px;height:25px;line-height:25px;color:#fff;--s:0.3px;"><span class="c">西甲</span></div><div class="a" style="left:83px;top:524px;width:77px;height:25px;background:#efefef;"></div><div class="t" style="left:83px;top:525px;width:77px;height:25px;line-height:25px;">24-11-10</div><div class="a" style="left:161px;top:524px;width:108px;height:25px;background:#efefef;"></div><div class="t" style="left:161px;top:525px;width:108px;height:25px;line-height:25px;"><span style="color:#0d800d"><span class="c">马洛卡</span></span></div><div class="a" style="left:270px;top:524px;width:89px;height:25px;background:#efefef;"></div><div class="t" style="left:270px;top:525px;width:89px;height:25px;line-height:25px;"><span style="color:#cc1111">0-1</span>(0-0)</div><div class="a" style="left:360px;top:524px;width:38px;height:25px;background:#efefef;"></div><div class="t" style="left:360px;top:525px;width:38px;height:25px;line-height:25px;">7-2</div><div class="a" style="left:399px;top:524px;width:111px;height:25px;background:#efefef;"></div><div class="t" style="left:399px;top:525px;width:111px;height:25px;line-height:25px;"><span class="c">马德里竞技</span></div><div class="a" style="left:511px;top:524px;width:47px;height:25px;background:#fdf9f6;"></div><div class="t" style="left:511px;top:525px;width:47px;height:25px;line-height:25px;">0.86</div><div class="a" style="left:559px;top:524px;width:83px;height:25px;background:#fdf9f6;"></div><div class="t" style="left:559px;top:525px;width:83px;height:25px;line-height:25px;"><span class="c">受平</span>/<span class="c">半</span></div><div class="a" style="left:643px;top:524px;width:51px;height:25px;background:#fdf9f6;"></div><div class="t" style="left:643px;top:525px;width:51px;height:25px;line-height:25px;">1.03</div><div class="a" style="left:695px;top:524px;width:65px;height:25px;background:#eef6fb;"></div><div class="t" style="left:695px;top:525px;width:65px;height:25px;line-height:25px;">3.42</div><div class="a" style="left:761px;top:524px;width:65px;height:25px;background:#eef6fb;"></div><div class="t" style="left:761px;top:525px;width:65px;height:25px;line-height:25px;">2.96</div><div class="a" style="left:827px;top:524px;width:67px;height:25px;background:#eef6fb;"></div><div class="t" style="left:827px;top:525px;width:67px;height:25px;line-height:25px;">2.35</div><div class="a" style="left:895px;top:524px;width:37px;height:25px;background:#efefef;"></div><div class="t" style="left:895px;top:525px;width:37px;height:25px;line-height:25px;"><span style="color:#0000cc"><span class="c">负</span></span></div><div class="a" style="left:933px;top:524px;width:37px;height:25px;background:#efefef;"></div><div class="t" style="left:933px;top:525px;width:37px;height:25px;line-height:25px;"><span style="color:#0000cc"><span class="c">输</span></span></div><div class="a" style="left:971px;top:524px;width:57px;height:25px;background:#efefef;"></div><div class="t" style="left:971px;top:525px;width:57px;height:25px;line-height:25px;"><span style="color:#0000cc"><span class="c">小</span></span></div><div class="a" style="left:2px;top:549px;width:80px;height:1px;background:#98d4b4;"></div><div class="a" style="left:2px;top:550px;width:80px;height:25px;background:#006633;"></div><div class="t" style="left:2px;top:551px;width:80px;height:25px;line-height:25px;color:#fff;--s:0.3px;"><span class="c">西甲</span></div><div class="a" style="left:83px;top:550px;width:77px;height:25px;background:#ffffff;"></div><div class="t" style="left:83px;top:551px;width:77px;height:25px;line-height:25px;">24-11-02</div><div class="a" style="left:161px;top:550px;width:108px;height:25px;background:#ffffff;"></div><div class="t" style="left:161px;top:551px;width:108px;height:25px;line-height:25px;"><span class="c">阿拉维斯</span></div><div class="a" style="left:270px;top:550px;width:89px;height:25px;background:#ffffff;"></div><div class="t" style="left:270px;top:551px;width:89px;height:25px;line-height:25px;"><span style="color:#cc1111">1-0</span>(0-0)</div><div class="a" style="left:360px;top:550px;width:38px;height:25px;background:#ffffff;"></div><div class="t" style="left:360px;top:551px;width:38px;height:25px;line-height:25px;">7-2</div><div class="a" style="left:399px;top:550px;width:111px;height:25px;background:#ffffff;"></div><div class="t" style="left:399px;top:551px;width:111px;height:25px;line-height:25px;"><span style="color:#0d800d"><span class="c">马洛卡</span></span></div><div class="a" style="left:511px;top:550px;width:47px;height:25px;background:#fdf9f6;"></div><div class="t" style="left:511px;top:551px;width:47px;height:25px;line-height:25px;">0.98</div><div class="a" style="left:559px;top:550px;width:83px;height:25px;background:#fdf9f6;"></div><div class="t" style="left:559px;top:551px;width:83px;height:25px;line-height:25px;"><span class="c">平</span>/<span class="c">半</span></div><div class="a" style="left:643px;top:550px;width:51px;height:25px;background:#fdf9f6;"></div><div class="t" style="left:643px;top:551px;width:51px;height:25px;line-height:25px;">0.91</div><div class="a" style="left:695px;top:550px;width:65px;height:25px;background:#eef6fb;"></div><div class="t" style="left:695px;top:551px;width:65px;height:25px;line-height:25px;">2.36</div><div class="a" style="left:761px;top:550px;width:65px;height:25px;background:#eef6fb;"></div><div class="t" style="left:761px;top:551px;width:65px;height:25px;line-height:25px;">2.92</div><div class="a" style="left:827px;top:550px;width:67px;height:25px;background:#eef6fb;"></div><div class="t" style="left:827px;top:551px;width:67px;height:25px;line-height:25px;">3.48</div><div class="a" style="left:895px;top:550px;width:37px;height:25px;background:#ffffff;"></div><div class="t" style="left:895px;top:551px;width:37px;height:25px;line-height:25px;"><span style="color:#0000cc"><span class="c">负</span></span></div><div class="a" style="left:933px;top:550px;width:37px;height:25px;background:#ffffff;"></div><div class="t" style="left:933px;top:551px;width:37px;height:25px;line-height:25px;"><span style="color:#0000cc"><span class="c">输</span></span></div><div class="a" style="left:971px;top:550px;width:57px;height:25px;background:#ffffff;"></div><div class="t" style="left:971px;top:551px;width:57px;height:25px;line-height:25px;"><span style="color:#0000cc"><span class="c">小</span></span></div><div class="a" style="left:2px;top:575px;width:80px;height:1px;background:#98d4b4;"></div><div class="a" style="left:2px;top:576px;width:80px;height:25px;background:#006633;"></div><div class="t" style="left:2px;top:577px;width:80px;height:25px;line-height:25px;color:#fff;--s:0.3px;"><span class="c">西甲</span></div><div class="a" style="left:83px;top:576px;width:77px;height:25px;background:#efefef;"></div><div class="t" style="left:83px;top:577px;width:77px;height:25px;line-height:25px;">24-10-29</div><div class="a" style="left:161px;top:576px;width:108px;height:25px;background:#efefef;"></div><div class="t" style="left:161px;top:577px;width:108px;height:25px;line-height:25px;"><span class="bd" style="margin-left:-4px">1</span><span style="color:#0d800d"><span class="c">马洛卡</span></span></div><div class="a" style="left:270px;top:576px;width:89px;height:25px;background:#efefef;"></div><div class="t" style="left:270px;top:577px;width:89px;height:25px;line-height:25px;"><span style="color:#cc1111">0-0</span>(0-0)</div><div class="a" style="left:360px;top:576px;width:38px;height:25px;background:#efefef;"></div><div class="t" style="left:360px;top:577px;width:38px;height:25px;line-height:25px;">1-14</div><div class="a" style="left:399px;top:576px;width:111px;height:25px;background:#efefef;"></div><div class="t" style="left:399px;top:577px;width:111px;height:25px;line-height:25px;"><span class="c">毕尔巴鄂竞技</span></div><div class="a" style="left:511px;top:576px;width:47px;height:25px;background:#fdf9f6;"></div><div class="t" style="left:511px;top:577px;width:47px;height:25px;line-height:25px;">1.13</div><div class="a" style="left:559px;top:576px;width:83px;height:25px;background:#fdf9f6;"></div><div class="t" style="left:559px;top:577px;width:83px;height:25px;line-height:25px;"><span class="c">平</span>/<span class="c">半</span></div><div class="a" style="left:643px;top:576px;width:51px;height:25px;background:#fdf9f6;"></div><div class="t" style="left:643px;top:577px;width:51px;height:25px;line-height:25px;">0.77</div><div class="a" style="left:695px;top:576px;width:65px;height:25px;background:#eef6fb;"></div><div class="t" style="left:695px;top:577px;width:65px;height:25px;line-height:25px;">2.59</div><div class="a" style="left:761px;top:576px;width:65px;height:25px;background:#eef6fb;"></div><div class="t" style="left:761px;top:577px;width:65px;height:25px;line-height:25px;">2.99</div><div class="a" style="left:827px;top:576px;width:67px;height:25px;background:#eef6fb;"></div><div class="t" style="left:827px;top:577px;width:67px;height:25px;line-height:25px;">3.02</div><div class="a" style="left:895px;top:576px;width:37px;height:25px;background:#efefef;"></div><div class="t" style="left:895px;top:577px;width:37px;height:25px;line-height:25px;"><span style="color:#117711"><span class="c">平</span></span></div><div class="a" style="left:933px;top:576px;width:37px;height:25px;background:#efefef;"></div><div class="t" style="left:933px;top:577px;width:37px;height:25px;line-height:25px;"><span style="color:#0000cc"><span class="c">输</span></span></div><div class="a" style="left:971px;top:576px;width:57px;height:25px;background:#efefef;"></div><div class="t" style="left:971px;top:577px;width:57px;height:25px;line-height:25px;"><span style="color:#0000cc"><span class="c">小</span></span></div><div class="a" style="left:2px;top:601px;width:80px;height:1px;background:#98d4b4;"></div><div class="a" style="left:2px;top:602px;width:80px;height:25px;background:#006633;"></div><div class="t" style="left:2px;top:603px;width:80px;height:25px;line-height:25px;color:#fff;--s:0.3px;"><span class="c">西甲</span></div><div class="a" style="left:83px;top:602px;width:77px;height:25px;background:#ffffff;"></div><div class="t" style="left:83px;top:603px;width:77px;height:25px;line-height:25px;">24-10-20</div><div class="a" style="left:161px;top:602px;width:108px;height:25px;background:#ffffff;"></div><div class="t" style="left:161px;top:603px;width:108px;height:25px;line-height:25px;"><span style="color:#0d800d"><span class="c">马洛卡</span></span></div><div class="a" style="left:270px;top:602px;width:89px;height:25px;background:#ffffff;"></div><div class="t" style="left:270px;top:603px;width:89px;height:25px;line-height:25px;"><span style="color:#cc1111">1-0</span>(0-0)</div><div class="a" style="left:360px;top:602px;width:38px;height:25px;background:#ffffff;"></div><div class="t" style="left:360px;top:603px;width:38px;height:25px;line-height:25px;">9-2</div><div class="a" style="left:399px;top:602px;width:111px;height:25px;background:#ffffff;"></div><div class="t" style="left:399px;top:603px;width:111px;height:25px;line-height:25px;"><span class="c">巴列卡诺</span></div><div class="a" style="left:511px;top:602px;width:47px;height:25px;background:#fdf9f6;"></div><div class="t" style="left:511px;top:603px;width:47px;height:25px;line-height:25px;">1.09</div><div class="a" style="left:559px;top:602px;width:83px;height:25px;background:#fdf9f6;"></div><div class="t" style="left:559px;top:603px;width:83px;height:25px;line-height:25px;"><span class="c">半球</span></div><div class="a" style="left:643px;top:602px;width:51px;height:25px;background:#fdf9f6;"></div><div class="t" style="left:643px;top:603px;width:51px;height:25px;line-height:25px;">0.80</div><div class="a" style="left:695px;top:602px;width:65px;height:25px;background:#eef6fb;"></div><div class="t" style="left:695px;top:603px;width:65px;height:25px;line-height:25px;">2.04</div><div class="a" style="left:761px;top:602px;width:65px;height:25px;background:#eef6fb;"></div><div class="t" style="left:761px;top:603px;width:65px;height:25px;line-height:25px;">3.09</div><div class="a" style="left:827px;top:602px;width:67px;height:25px;background:#eef6fb;"></div><div class="t" style="left:827px;top:603px;width:67px;height:25px;line-height:25px;">4.15</div><div class="a" style="left:895px;top:602px;width:37px;height:25px;background:#ffffff;"></div><div class="t" style="left:895px;top:603px;width:37px;height:25px;line-height:25px;"><span style="color:#cc1111"><span class="c">胜</span></span></div><div class="a" style="left:933px;top:602px;width:37px;height:25px;background:#ffffff;"></div><div class="t" style="left:933px;top:603px;width:37px;height:25px;line-height:25px;"><span style="color:#cc1111"><span class="c">赢</span></span></div><div class="a" style="left:971px;top:602px;width:57px;height:25px;background:#ffffff;"></div><div class="t" style="left:971px;top:603px;width:57px;height:25px;line-height:25px;"><span style="color:#0000cc"><span class="c">小</span></span></div><div class="a" style="left:2px;top:627px;width:80px;height:1px;background:#98d4b4;"></div><div class="a" style="left:2px;top:628px;width:80px;height:25px;background:#006633;"></div><div class="t" style="left:2px;top:629px;width:80px;height:25px;line-height:25px;color:#fff;--s:0.3px;"><span class="c">西甲</span></div><div class="a" style="left:83px;top:628px;width:77px;height:25px;background:#efefef;"></div><div class="t" style="left:83px;top:629px;width:77px;height:25px;line-height:25px;">24-10-05</div><div class="a" style="left:161px;top:628px;width:108px;height:25px;background:#efefef;"></div><div class="t" style="left:161px;top:629px;width:108px;height:25px;line-height:25px;"><span class="c">西班牙人</span></div><div class="a" style="left:270px;top:628px;width:89px;height:25px;background:#efefef;"></div><div class="t" style="left:270px;top:629px;width:89px;height:25px;line-height:25px;"><span style="color:#cc1111">2-1</span>(1-0)</div><div class="a" style="left:360px;top:628px;width:38px;height:25px;background:#efefef;"></div><div class="t" style="left:360px;top:629px;width:38px;height:25px;line-height:25px;">4-6</div><div class="a" style="left:399px;top:628px;width:111px;height:25px;background:#efefef;"></div><div class="t" style="left:399px;top:629px;width:111px;height:25px;line-height:25px;"><span style="color:#0d800d"><span class="c">马洛卡</span></span></div><div class="a" style="left:511px;top:628px;width:47px;height:25px;background:#fdf9f6;"></div><div class="t" style="left:511px;top:629px;width:47px;height:25px;line-height:25px;">0.92</div><div class="a" style="left:559px;top:628px;width:83px;height:25px;background:#fdf9f6;"></div><div class="t" style="left:559px;top:629px;width:83px;height:25px;line-height:25px;"><span class="c">受平</span>/<span class="c">半</span></div><div class="a" style="left:643px;top:628px;width:51px;height:25px;background:#fdf9f6;"></div><div class="t" style="left:643px;top:629px;width:51px;height:25px;line-height:25px;">0.97</div><div class="a" style="left:695px;top:628px;width:65px;height:25px;background:#eef6fb;"></div><div class="t" style="left:695px;top:629px;width:65px;height:25px;line-height:25px;">3.41</div><div class="a" style="left:761px;top:628px;width:65px;height:25px;background:#eef6fb;"></div><div class="t" style="left:761px;top:629px;width:65px;height:25px;line-height:25px;">2.91</div><div class="a" style="left:827px;top:628px;width:67px;height:25px;background:#eef6fb;"></div><div class="t" style="left:827px;top:629px;width:67px;height:25px;line-height:25px;">2.39</div><div class="a" style="left:895px;top:628px;width:37px;height:25px;background:#efefef;"></div><div class="t" style="left:895px;top:629px;width:37px;height:25px;line-height:25px;"><span style="color:#0000cc"><span class="c">负</span></span></div><div class="a" style="left:933px;top:628px;width:37px;height:25px;background:#efefef;"></div><div class="t" style="left:933px;top:629px;width:37px;height:25px;line-height:25px;"><span style="color:#0000cc"><span class="c">输</span></span></div><div class="a" style="left:971px;top:628px;width:57px;height:25px;background:#efefef;"></div><div class="t" style="left:971px;top:629px;width:57px;height:25px;line-height:25px;"><span style="color:#cc1111"><span class="c">大</span></span></div><div class="a" style="left:2px;top:653px;width:80px;height:1px;background:#98d4b4;"></div><div class="a" style="left:2px;top:654px;width:80px;height:25px;background:#006633;"></div><div class="t" style="left:2px;top:655px;width:80px;height:25px;line-height:25px;color:#fff;--s:0.3px;"><span class="c">西甲</span></div><div class="a" style="left:83px;top:654px;width:77px;height:25px;background:#ffffff;"></div><div class="t" style="left:83px;top:655px;width:77px;height:25px;line-height:25px;">24-09-28</div><div class="a" style="left:161px;top:654px;width:108px;height:25px;background:#ffffff;"></div><div class="t" style="left:161px;top:655px;width:108px;height:25px;line-height:25px;"><span class="c">巴拉多利德</span></div><div class="a" style="left:270px;top:654px;width:89px;height:25px;background:#ffffff;"></div><div class="t" style="left:270px;top:655px;width:89px;height:25px;line-height:25px;"><span style="color:#cc1111">1-2</span>(0-0)</div><div class="a" style="left:360px;top:654px;width:38px;height:25px;background:#ffffff;"></div><div class="t" style="left:360px;top:655px;width:38px;height:25px;line-height:25px;">7-4</div><div class="a" style="left:399px;top:654px;width:111px;height:25px;background:#ffffff;"></div><div class="t" style="left:399px;top:655px;width:111px;height:25px;line-height:25px;"><span style="color:#0d800d"><span class="c">马洛卡</span></span></div><div class="a" style="left:511px;top:654px;width:47px;height:25px;background:#fdf9f6;"></div><div class="t" style="left:511px;top:655px;width:47px;height:25px;line-height:25px;">0.77</div><div class="a" style="left:559px;top:654px;width:83px;height:25px;background:#fdf9f6;"></div><div class="t" style="left:559px;top:655px;width:83px;height:25px;line-height:25px;"><span class="c">受平</span>/<span class="c">半</span></div><div class="a" style="left:643px;top:654px;width:51px;height:25px;background:#fdf9f6;"></div><div class="t" style="left:643px;top:655px;width:51px;height:25px;line-height:25px;">1.13</div><div class="a" style="left:695px;top:654px;width:65px;height:25px;background:#eef6fb;"></div><div class="t" style="left:695px;top:655px;width:65px;height:25px;line-height:25px;">3.06</div><div class="a" style="left:761px;top:654px;width:65px;height:25px;background:#eef6fb;"></div><div class="t" style="left:761px;top:655px;width:65px;height:25px;line-height:25px;">2.87</div><div class="a" style="left:827px;top:654px;width:67px;height:25px;background:#eef6fb;"></div><div class="t" style="left:827px;top:655px;width:67px;height:25px;line-height:25px;">2.63</div><div class="a" style="left:895px;top:654px;width:37px;height:25px;background:#ffffff;"></div><div class="t" style="left:895px;top:655px;width:37px;height:25px;line-height:25px;"><span style="color:#cc1111"><span class="c">胜</span></span></div><div class="a" style="left:933px;top:654px;width:37px;height:25px;background:#ffffff;"></div><div class="t" style="left:933px;top:655px;width:37px;height:25px;line-height:25px;"><span style="color:#cc1111"><span class="c">赢</span></span></div><div class="a" style="left:971px;top:654px;width:57px;height:25px;background:#ffffff;"></div><div class="t" style="left:971px;top:655px;width:57px;height:25px;line-height:25px;"><span style="color:#cc1111"><span class="c">大</span></span></div><div class="a" style="left:2px;top:679px;width:80px;height:1px;background:#98d4b4;"></div><div class="a" style="left:2px;top:680px;width:80px;height:25px;background:#006633;"></div><div class="t" style="left:2px;top:681px;width:80px;height:25px;line-height:25px;color:#fff;--s:0.3px;"><span class="c">西甲</span></div><div class="a" style="left:83px;top:680px;width:77px;height:25px;background:#efefef;"></div><div class="t" style="left:83px;top:681px;width:77px;height:25px;line-height:25px;">24-09-24</div><div class="a" style="left:161px;top:680px;width:108px;height:25px;background:#efefef;"></div><div class="t" style="left:161px;top:681px;width:108px;height:25px;line-height:25px;"><span class="c">皇家贝蒂斯</span></div><div class="a" style="left:270px;top:680px;width:89px;height:25px;background:#efefef;"></div><div class="t" style="left:270px;top:681px;width:89px;height:25px;line-height:25px;"><span style="color:#cc1111">1-2</span>(1-1)</div><div class="a" style="left:360px;top:680px;width:38px;height:25px;background:#efefef;"></div><div class="t" style="left:360px;top:681px;width:38px;height:25px;line-height:25px;">6-3</div><div class="a" style="left:399px;top:680px;width:111px;height:25px;background:#efefef;"></div><div class="t" style="left:399px;top:681px;width:111px;height:25px;line-height:25px;"><span style="color:#0d800d"><span class="c">马洛卡</span></span></div><div class="a" style="left:511px;top:680px;width:47px;height:25px;background:#fdf9f6;"></div><div class="t" style="left:511px;top:681px;width:47px;height:25px;line-height:25px;">0.86</div><div class="a" style="left:559px;top:680px;width:83px;height:25px;background:#fdf9f6;"></div><div class="t" style="left:559px;top:681px;width:83px;height:25px;line-height:25px;"><span class="c">半球</span></div><div class="a" style="left:643px;top:680px;width:51px;height:25px;background:#fdf9f6;"></div><div class="t" style="left:643px;top:681px;width:51px;height:25px;line-height:25px;">1.03</div><div class="a" style="left:695px;top:680px;width:65px;height:25px;background:#eef6fb;"></div><div class="t" style="left:695px;top:681px;width:65px;height:25px;line-height:25px;">1.84</div><div class="a" style="left:761px;top:680px;width:65px;height:25px;background:#eef6fb;"></div><div class="t" style="left:761px;top:681px;width:65px;height:25px;line-height:25px;">3.20</div><div class="a" style="left:827px;top:680px;width:67px;height:25px;background:#eef6fb;"></div><div class="t" style="left:827px;top:681px;width:67px;height:25px;line-height:25px;">5.02</div><div class="a" style="left:895px;top:680px;width:37px;height:25px;background:#efefef;"></div><div class="t" style="left:895px;top:681px;width:37px;height:25px;line-height:25px;"><span style="color:#cc1111"><span class="c">胜</span></span></div><div class="a" style="left:933px;top:680px;width:37px;height:25px;background:#efefef;"></div><div class="t" style="left:933px;top:681px;width:37px;height:25px;line-height:25px;"><span style="color:#cc1111"><span class="c">赢</span></span></div><div class="a" style="left:971px;top:680px;width:57px;height:25px;background:#efefef;"></div><div class="t" style="left:971px;top:681px;width:57px;height:25px;line-height:25px;"><span style="color:#cc1111"><span class="c">大</span></span></div><div class="a" style="left:2px;top:706px;width:1026px;height:25px;background:#ffffff;"></div><div class="t" style="left:2px;top:707px;width:1026px;height:25px;line-height:25px;letter-spacing:0.22px;"><span class="c">近</span><span style="color:#cc1111">10</span><span class="c">场</span>,<span class="c">胜</span>5<span class="c">平</span>1<span class="c">负</span>4, <span class="c">胜率</span>:<span style="color:#cc1111">50%</span> <span class="c">让胜率</span>:<span style="color:#cc1111">50%</span> <span class="c">大率</span>:<span style="color:#cc1111">60%</span> <span class="c">单率</span>:<span style="color:#cc1111">80%</span></div><select class="sl" style="left:542px;top:407px;width:61px;height:19px"><option>Crow*</option></select><select class="sl" style="left:612px;top:407px;width:50px;height:19px"><option><span class="c">终指</span></option></select><select class="sl" style="left:730px;top:407px;width:69px;height:19px"><option><span class="c">平均值</span></option></select><select class="sl" style="left:808px;top:407px;width:50px;height:19px"><option><span class="c">终指</span></option></select><select class="sl" style="left:936px;top:407px;width:50px;height:19px"><option><span class="c">全场</span></option></select>
</body></html>
